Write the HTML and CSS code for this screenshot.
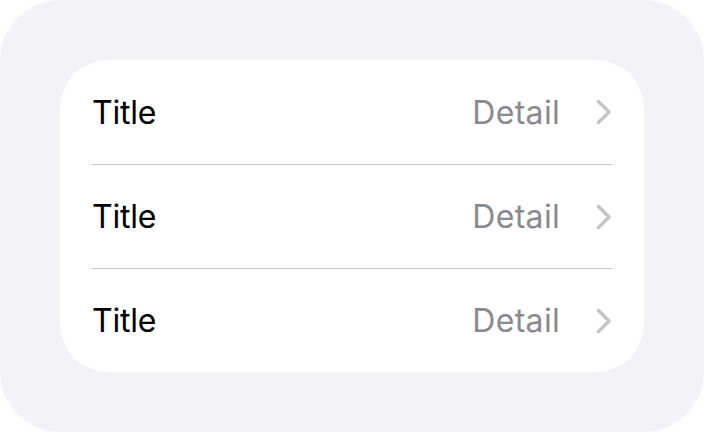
FILE: index.html
```html
<!DOCTYPE html>
<html>
<head>
<meta charset="utf-8">
<link rel="stylesheet" href="styles.css">
</head>
<body>
<div class="frame">
  <div class="card">
    <div class="row">
      <span class="title">Title</span>
      <span class="detail">Detail</span>
      <svg class="chev" viewBox="0 0 16 26" width="16" height="26"><path d="M2.5 2.5 L13 13 L2.5 23.5" fill="none" stroke="#c4c4c6" stroke-width="3.4" stroke-linecap="round" stroke-linejoin="round"/></svg>
    </div>
    <div class="row">
      <span class="title">Title</span>
      <span class="detail">Detail</span>
      <svg class="chev" viewBox="0 0 16 26" width="16" height="26"><path d="M2.5 2.5 L13 13 L2.5 23.5" fill="none" stroke="#c4c4c6" stroke-width="3.4" stroke-linecap="round" stroke-linejoin="round"/></svg>
    </div>
    <div class="row">
      <span class="title">Title</span>
      <span class="detail">Detail</span>
      <svg class="chev" viewBox="0 0 16 26" width="16" height="26"><path d="M2.5 2.5 L13 13 L2.5 23.5" fill="none" stroke="#c4c4c6" stroke-width="3.4" stroke-linecap="round" stroke-linejoin="round"/></svg>
    </div>
  </div>
</div>
</body>
</html>
```
FILE: styles.css
```css
html, body {
  margin: 0;
  padding: 0;
  background: #ffffff;
}
.frame {
  width: 704px;
  height: 432px;
  box-sizing: border-box;
  background: #f2f2f7;
  border-radius: 60px;
  padding: 60px;
  font-family: Inter, "Liberation Sans", sans-serif;
}
.card {
  background: #ffffff;
  border-radius: 48px;
  padding: 0 32px;
  display: flex;
  flex-direction: column;
}
.row {
  height: 104px;
  display: flex;
  align-items: center;
  box-sizing: border-box;
}
.row + .row {
  border-top: 1px solid #c6c6c8;
}
.title {
  flex: 1;
  font-size: 32px;
  color: #000000;
  letter-spacing: -0.2px;
}
.detail {
  font-size: 32px;
  color: #8a8a8e;
  margin-right: 36px;
  letter-spacing: 0.3px;
}
.chev {
  display: block;
}
```
